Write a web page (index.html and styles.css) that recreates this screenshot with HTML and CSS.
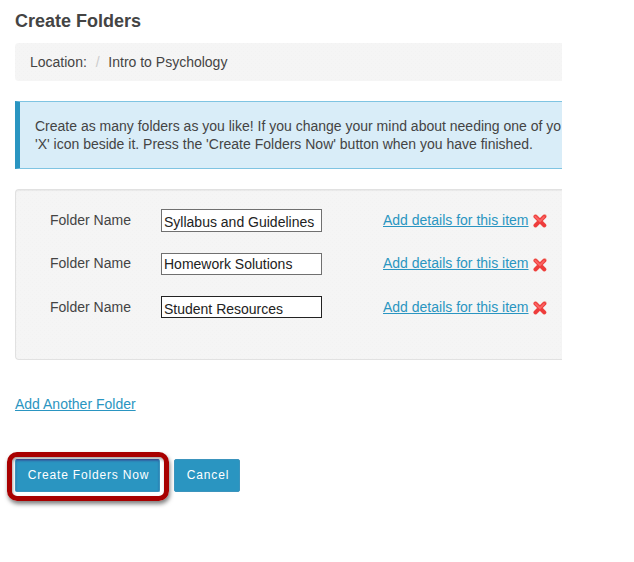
FILE: index.html
```html
<!DOCTYPE html>
<html lang="en">
<head>
<meta charset="utf-8">
<title>Create Folders</title>
<link rel="stylesheet" href="styles.css">
</head>
<body>
<svg class="defs" width="0" height="0" aria-hidden="true">
  <symbol id="remove" viewBox="0 0 14 14">
    <path d="M2.5 2.3L11.3 11.5M11.6 2.1L2.5 11.5" stroke="#f0b5a8" stroke-width="4.2" stroke-linecap="round"/>
    <path d="M2.5 2.7L11.3 11.3M11.3 2.7L2.5 11.3" stroke="#ee3c3c" stroke-width="3.8" stroke-linecap="round"/>
    <path d="M2.3 2.6L7 7.2L11 3" fill="none" stroke="#fb6765" stroke-width="1.8" stroke-linecap="round"/>
  </symbol>
</svg>
<main class="page">
  <h1 class="title">Create Folders</h1>
  <nav class="breadcrumb"><span>Location:</span><span class="slash">/</span><span>Intro to Psychology</span></nav>
  <div class="notice">Create as many folders as you like! If you change your mind about needing one of yo<br>'X' icon beside it. Press the 'Create Folders Now' button when you have finished.</div>
  <form class="folders">
    <div class="row">
      <label for="f1">Folder Name</label>
      <input class="first" id="f1" type="text" value="Syllabus and Guidelines">
      <a class="link" href="#">Add details for this item</a>
      <svg class="remove"><use href="#remove"/></svg>
    </div>
    <div class="row second">
      <label for="f2">Folder Name</label>
      <input id="f2" type="text" value="Homework Solutions">
      <a class="link" href="#">Add details for this item</a>
      <svg class="remove"><use href="#remove"/></svg>
    </div>
    <div class="row third">
      <label for="f3">Folder Name</label>
      <input class="active" id="f3" type="text" value="Student Resources">
      <a class="link" href="#">Add details for this item</a>
      <svg class="remove"><use href="#remove"/></svg>
    </div>
  </form>
  <a class="link add" href="#">Add Another Folder</a>
  <div class="actions">
    <div class="highlighted"><button class="btn primary" type="button">Create Folders Now</button></div>
    <button class="btn cancel" type="button">Cancel</button>
  </div>
</main>
</body>
</html>
```
FILE: styles.css
```css
* { box-sizing: border-box; }

body {
  margin: 0;
  background: #fff;
  color: #444;
  font: 14px/18px "Liberation Sans", Arial, sans-serif;
}

.defs { display: none; }

.page {
  width: 562px;
  padding: 10px 0 0 15px;
  overflow: hidden;
}

.title {
  margin: 0 0 11px;
  font-size: 18px;
  line-height: 22px;
}

.breadcrumb, .folders {
  background:
    linear-gradient(#f2f2f2, #f2f2f2) 0 0 / 0 0 no-repeat,
    conic-gradient(from 0deg at 1px 1px, transparent 270deg, #f2f2f2 0) 0 0 / 4px 4px,
    conic-gradient(from 0deg at 1px 1px, transparent 270deg, #f3f3f3 0) 2px 2px / 4px 4px,
    #f5f5f5;
}

.breadcrumb {
  display: flex;
  height: 38px;
  padding: 10px 15px;
  border-radius: 4px 0 0 4px;
}

.slash {
  width: 21.5px;
  text-align: center;
  color: #ccc;
}

.notice {
  height: 68px;
  margin: 20px 0;
  padding: 15px 0 0 15px;
  border: solid #7fc4e2;
  border-width: 1px 0 1px 5px;
  border-left-color: #2a95c1;
  background: #d9edf8;
  white-space: nowrap;
}

.folders {
  height: 171px;
  padding: 19px 0 0 34px;
  border: 1px solid #e1e1e1;
  border-right: 0;
  border-radius: 4px 0 0 4px;
  box-shadow: inset 0 1px 1px rgba(0, 0, 0, .05);
}

.row {
  display: grid;
  grid-template-columns: 111px 222px 150px 14px;
  align-items: start;
  height: 44px;
}

.row label, .row .link { margin-top: 2px; }

.row.second { height: 43px; }

.row input {
  width: 161px;
  height: 22px;
  padding: 0 2px 0;
  border: 1px solid #707070;
  border-radius: 0;
  outline: 0;
  background: #fff;
  color: #222;
  font: inherit;
}

.row.second label, .row.second .link { margin-top: 1px; }

.row input.first { height: 23px; padding-top: 3px; }
.row input.active { border-color: #222; padding-top: 4px; }

.remove {
  width: 14px;
  height: 14px;
  margin-top: 5px;
}

.link {
  color: #2a95c1;
  text-decoration: underline;
  text-decoration-thickness: 1px;
  text-underline-offset: 1px;
}

.add {
  display: block;
  width: max-content;
  margin-top: 35px;
}

.actions {
  display: flex;
  align-items: flex-start;
  margin: 39px 0 0 -8px;
  padding-bottom: 12px;
}

.highlighted {
  width: 162px;
  height: 49px;
  padding: 2px 3px;
  border: 5px solid #a80000;
  border-radius: 10px;
  box-shadow: 1px 3px 4px rgba(0, 0, 0, .5), inset 1px 2px 3px rgba(0, 0, 0, .35);
}

.btn {
  display: block;
  height: 33px;
  padding: 0 0 0 2px;
  border: 1px solid #3b94bd;
  border-radius: 2px;
  background: #2a95c1;
  color: #fff;
  font: 12px/29px "Liberation Sans", Arial, sans-serif;
  letter-spacing: .83px;
}

.primary {
  width: 145px;
  border-top-color: #354f91;
  box-shadow: inset 0 1px 2px #3161a0;
}

.cancel {
  width: 66px;
  margin: 7px 0 0 5px;
}
```
